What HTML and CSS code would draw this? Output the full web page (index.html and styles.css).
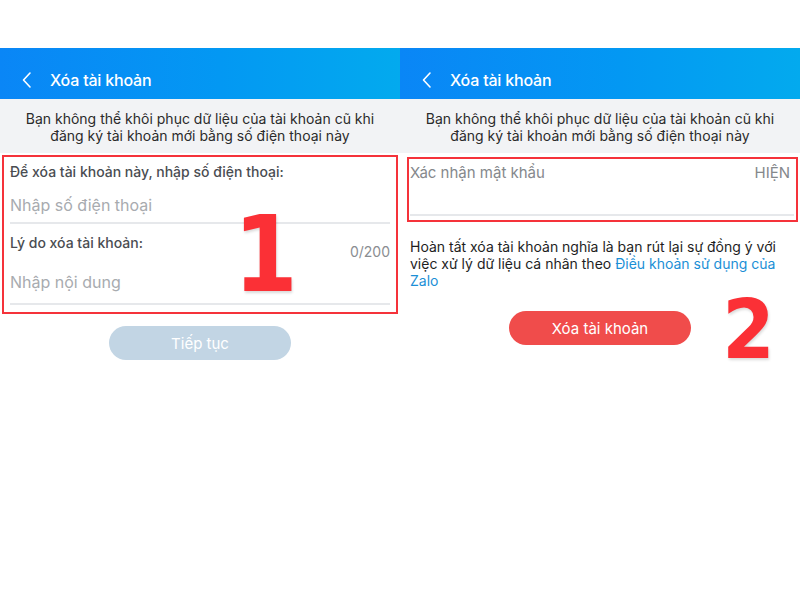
FILE: index.html
```html
<!DOCTYPE html>
<html lang="vi">
<head>
    <meta charset="UTF-8">
    <meta name="viewport" content="width=device-width, initial-scale=1.0">
    <title>Xóa tài khoản</title>
    <link rel="stylesheet" href="styles.css">
</head>
<body>
    <div class="screens">
        <!-- Bước 1 -->
        <div class="screen">
            <div class="header">
                <svg class="back" width="12" height="18" viewBox="0 0 12 18"><path d="M9 2 L2.5 9 L9 16" fill="none" stroke="#fff" stroke-width="1.6" stroke-linecap="round" stroke-linejoin="round"/></svg>
                <span class="title">Xóa tài khoản</span>
            </div>
            <div class="notice">Bạn không thể khôi phục dữ liệu của tài khoản cũ khi<br>đăng ký tài khoản mới bằng số điện thoại này</div>
            <div class="mark mark-left">
                <div class="field">
                    <div class="label">Để xóa tài khoản này, nhập số điện thoại:</div>
                    <div class="placeholder">Nhập số điện thoại</div>
                </div>
                <div class="field">
                    <div class="label-row">
                        <span class="label">Lý do xóa tài khoản:</span>
                        <span class="counter">0/200</span>
                    </div>
                    <div class="placeholder">Nhập nội dung</div>
                </div>
                <div class="step step-1">1</div>
            </div>
            <div class="actions">
                <button class="btn btn-disabled">Tiếp tục</button>
            </div>
        </div>

        <!-- Bước 2 -->
        <div class="screen">
            <div class="header">
                <svg class="back" width="12" height="18" viewBox="0 0 12 18"><path d="M9 2 L2.5 9 L9 16" fill="none" stroke="#fff" stroke-width="1.6" stroke-linecap="round" stroke-linejoin="round"/></svg>
                <span class="title">Xóa tài khoản</span>
            </div>
            <div class="notice">Bạn không thể khôi phục dữ liệu của tài khoản cũ khi<br>đăng ký tài khoản mới bằng số điện thoại này</div>
            <div class="mark mark-right">
                <div class="password-row">
                    <span class="pw-label">Xác nhận mật khẩu</span>
                    <span class="pw-show">HIỆN</span>
                </div>
            </div>
            <p class="terms">Hoàn tất xóa tài khoản nghĩa là bạn rút lại sự đồng ý với việc xử lý dữ liệu cá nhân theo <a href="#">Điều khoản sử dụng của Zalo</a></p>
            <div class="actions actions-delete">
                <button class="btn btn-danger">Xóa tài khoản</button>
                <div class="step step-2">2</div>
            </div>
        </div>
    </div>
</body>
</html>
```

FILE: styles.css
```css
body {
    margin: 0;
    background-color: #ffffff;
    font-family: 'Inter', 'Liberation Sans', sans-serif;
}
.screens {
    display: flex;
    width: 800px;
    height: 600px;
}
.screen {
    width: 400px;
    padding-top: 48px;
    position: relative;
}
.header {
    height: 51px;
    display: flex;
    align-items: center;
    padding: 12px 0 0 21px;
    box-sizing: border-box;
    background: linear-gradient(90deg, #0a86f6 0%, #0398f3 55%, #03aaee 100%);
}
.back {
    margin-right: 17px;
}
.title {
    color: #ffffff;
    font-size: 16px;
    font-weight: 500;
    letter-spacing: -0.2px;
}
.notice {
    background-color: #f2f3f5;
    height: 54px;
    box-sizing: border-box;
    padding-top: 11px;
    text-align: center;
    font-size: 14px;
    line-height: 17px;
    color: #2b2b2b;
}
.mark {
    border: 2px solid #f5323a;
    position: relative;
}
.mark-left {
    margin: 2px 2px 0 2px;
    padding: 0 6px 7px 6px;
}
.field {
    border-bottom: 2px solid #e6e8eb;
}
.label {
    font-size: 14px;
    color: #4a4d52;
    font-weight: 500;
}
.field .label {
    display: block;
    padding-top: 6px;
    line-height: 17px;
}
.label-row {
    display: flex;
    justify-content: space-between;
}
.label-row .label {
    padding-top: 10px;
}
.counter {
    font-size: 14px;
    color: #8a8d91;
    padding-top: 19px;
}
.placeholder {
    font-size: 16px;
    color: #a8abaf;
    padding: 16px 0 7px 0;
    line-height: 19px;
}
.label-row + .placeholder {
    padding-top: 13px;
    padding-bottom: 11px;
}
.step {
    position: absolute;
    color: #fb3036;
    font-family: 'DejaVu Sans', sans-serif;
    font-weight: bold;
    text-shadow: 1px 2px 3px rgba(0, 0, 0, 0.15);
}
.step-1 {
    font-size: 105px;
    line-height: 1;
    left: 225px;
    top: 46px;
    transform: scaleX(0.88);
}
.actions {
    display: flex;
    justify-content: center;
    padding-top: 12px;
}
.btn {
    width: 182px;
    height: 34px;
    border: none;
    border-radius: 17px;
    color: #ffffff;
    font-family: 'Inter', 'Liberation Sans', sans-serif;
    font-size: 15px;
}
.btn-disabled {
    background-color: #c2d5e4;
}
.btn-danger {
    background-color: #f04c4b;
}
.mark-right {
    margin: 4px 2px 0 7px;
    height: 65px;
    box-sizing: border-box;
    padding: 0 2px 0 1px;
}
.password-row {
    display: flex;
    justify-content: space-between;
    font-size: 15px;
    color: #85888c;
    padding: 4px 4px 0 0;
    height: 57px;
    box-sizing: border-box;
    border-bottom: 2px solid #e6e8eb;
}
.terms {
    margin: 16px 8px 0 10px;
    font-size: 14px;
    line-height: 17px;
    color: #1e1e1e;
}
.terms a {
    color: #1b8fd6;
    text-decoration: none;
}
.actions-delete {
    position: relative;
    padding-top: 22px;
}
.step-2 {
    font-size: 82px;
    line-height: 1;
    left: 320px;
    top: 0;
    transform: scaleX(0.92);
}
```
